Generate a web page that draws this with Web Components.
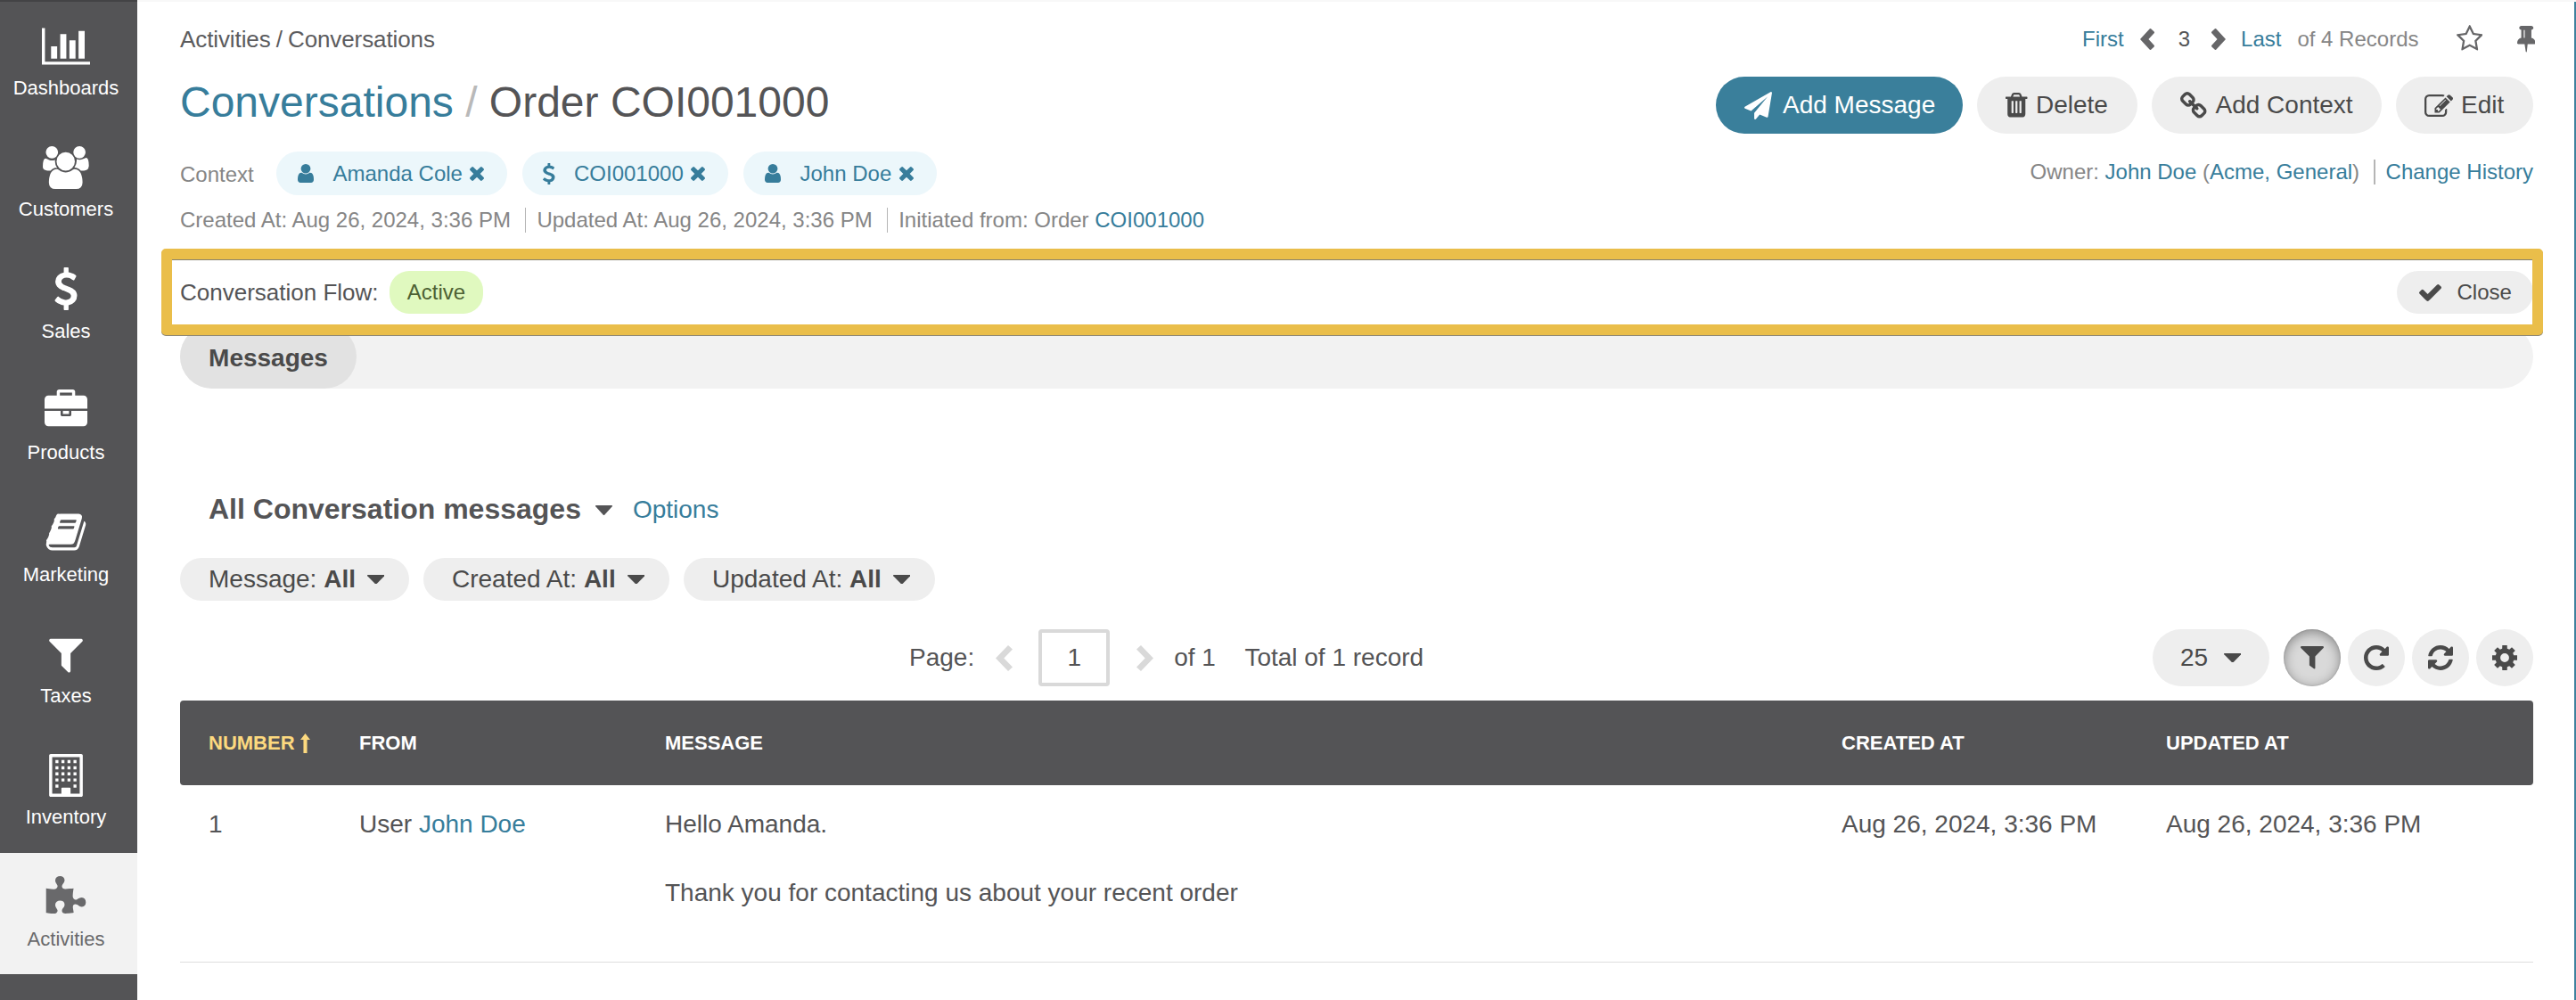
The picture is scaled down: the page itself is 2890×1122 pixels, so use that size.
<!DOCTYPE html>
<html lang="en">
<head>
<meta charset="utf-8">
<title>Order COI001000 - Conversations - Activities</title>
<style>
  html, body { margin: 0; height: 1122px; overflow: hidden; background: #fff; }
  body { font-family: "Liberation Sans", Arial, sans-serif; color: #545456; }
</style>
</head>
<body>
<app-shell>
  <app-sidebar slot="sidebar">
    <nav-item icon="chart" box="2048">Dashboards</nav-item>
    <nav-item icon="users" box="1920">Customers</nav-item>
    <nav-item icon="dollar">Sales</nav-item>
    <nav-item icon="briefcase">Products</nav-item>
    <nav-item icon="book">Marketing</nav-item>
    <nav-item icon="filter">Taxes</nav-item>
    <nav-item icon="building">Inventory</nav-item>
    <nav-item icon="puzzle" active>Activities</nav-item>
  </app-sidebar>
  <page-header></page-header>
  <flow-bar status="Active">Conversation Flow:</flow-bar>
  <tab-bar>Messages</tab-bar>
  <grid-title>All Conversation messages</grid-title>
  <filter-bar>
    <filter-chip label="Message:" style="width:257px"></filter-chip>
    <filter-chip label="Created At:" style="width:276px"></filter-chip>
    <filter-chip label="Updated At:" style="width:282px"></filter-chip>
  </filter-bar>
  <grid-toolbar></grid-toolbar>
  <message-grid></message-grid>
</app-shell>

<script>
const gear = (() => {
  const p = (r, a) => (r * Math.sin(a)).toFixed(2) + ' ' + (-r * Math.cos(a)).toFixed(2);
  const pts = [];
  for (let i = 0; i < 8; i++) {
    const a = i * Math.PI / 4;
    pts.push(p(10.3, a - .27), p(13.9, a - .19), p(13.9, a + .19), p(10.3, a + .27));
  }
  return 'M' + pts.join('L') + 'ZM4.8 0A4.8 4.8 0 1 0 -4.8 0A4.8 4.8 0 1 0 4.8 0Z';
})();
const building = (() => {
  const r = (x, y, w, h) => `M${x} ${y}h${w}v${h}h${-w}z`;
  let d = 'M256 0h1280q26 0 45 19t19 45v1664q0 26-19 45t-45 19h-1280q-26 0-45-19t-19-45v-1664q0-26 19-45t45-19z'
        + 'M320 128v1536h384v-224q0-32 32-32h320q32 0 32 32v224h384v-1536z';
  for (let row = 0; row < 5; row++)
    for (let col = 0; col < 4; col++)
      if (row < 4 || col % 3 === 0) d += r(456 + col * 252, 256 + row * 256, 124, 128);
  return d;
})();
const ICONS = {
  chart: "M640 896v512h-256v-512h256zm384-512v1024h-256v-1024h256zm1024 1152v128h-2048v-1536h128v1408h1920zm-640-896v768h-256v-768h256zm384-384v1152h-256v-1152h256z",
  users: "M593 896q-162 5-265 128h-134q-82 0-138-40.5t-56-118.5q0-353 124-353 6 0 43.5 21t97.5 42.5 119 21.5q67 0 133-23-5 37-5 66 0 159 93 286zm1071 637q0 120-73 189.5t-194 69.5h-874q-121 0-194-69.5t-73-189.5q0-53 3.5-103.5t14-109 26.5-108.5 43-97.5 62-81 85.5-53.5 111.5-20q10 0 43 21.5t73 48 107 48 135 21.5 135-21.5 107-48 73-48 43-21.5q61 0 111.5 20t85.5 53.5 62 81 43 97.5 26.5 108.5 14 109 3.5 103.5zm-1024-1277q0 106-75 181t-181 75-181-75-75-181 75-181 181-75 181 75 75 181zm704 384q0 159-112.5 271.5t-271.5 112.5-271.5-112.5-112.5-271.5 112.5-271.5 271.5-112.5 271.5 112.5 112.5 271.5zm576 225q0 78-56 118.5t-138 40.5h-134q-103-123-265-128 93-127 93-286 0-29-5-66 66 23 133 23 59 0 119-21.5t97.5-42.5 43.5-21q124 0 124 353zm-128-609q0 106-75 181t-181 75-181-75-75-181 75-181 181-75 181 75 75 181z",
  dollar: "M1362 1185q0 153-99.5 263.5t-258.5 136.5v175q0 14-9 23t-23 9h-135q-13 0-22.5-9.5t-9.5-22.5v-175q-66-9-127.5-31t-101.5-44.5-74-48-46.5-37.5-17.5-18q-17-21-2-41l103-135q7-10 23-12 15-2 24 9l2 2q113 99 243 125 37 8 74 8 81 0 142.5-43t61.5-122q0-28-15-53t-33.5-42-58.5-37.5-66-32-80-32.5q-39-16-61.5-25t-61.5-26.5-62.5-31-56.5-35.5-53.5-42.5-43.5-49-35.5-58-21-66.5-8.5-78q0-138 98-242t255-134v-180q0-13 9.5-22.5t22.5-9.5h135q14 0 23 9t9 23v176q57 6 110.5 23t87 33.5 63.5 37.5 39 29 15 14q17 18 5 38l-81 146q-8 15-23 16-14 3-27-7-3-3-14.5-12t-39-26.5-58.5-32-74.5-26-85.5-11.5q-95 0-155 43t-60 111q0 26 8.5 48t29.5 41.5 39.5 33 56 31 60.5 27 70 27.5q53 20 81 31.5t76 35 75.5 42.5 62 50 53 63.5 31.5 76.5 13 94z",
  briefcase: "M640 256h512v-128h-512v128zm1152 640v480q0 66-47 113t-113 47h-1472q-66 0-113-47t-47-113v-480h672v160q0 26 19 45t45 19h320q26 0 45-19t19-45v-160h672zm-768 0v128h-256v-128h256zm768-480v384h-1792v-384q0-66 47-113t113-47h352v-160q0-40 28-68t68-28h576q40 0 68 28t28 68v160h352q66 0 113 47t47 113z",
  book: "M1703 478q40 57 18 129l-275 906q-19 64-76.5 107.5t-122.5 43.5h-923q-77 0-148.5-53.5t-99.5-131.5q-24-67-2-127 0-4 3-27t4-37q1-8-3-21.5t-3-19.5q2-11 8-21t16.5-23.5 16.5-23.5q23-38 45-91.5t30-91.5q3-10 .5-30t-.5-28q3-11 17-28t17-23q21-36 42-92t25-90q1-9-2.5-32t.5-28q4-13 22-30.5t22-22.5q19-26 42.5-84.5t27.5-96.5q1-8-3-25.5t-2-26.5q2-8 9-18t18-23 17-21q8-12 16.5-30.5t15-35 16-36 19.5-32 26.5-23.5 36-11.5 47.5 5.5l-1 3q38-9 51-9h761q74 0 114 56t18 130l-274 906q-36 119-71.5 153.5t-128.5 34.5h-869q-27 0-38 15-11 16-1 43 24 70 144 70h923q29 0 56-15.5t35-41.5l300-987q7-22 5-57 38 15 59 43zm-1064 2q-4 13 2 22.5t20 9.5h608q13 0 25.5-9.5t16.5-22.5l21-64q4-13-2-22.5t-20-9.5h-608q-13 0-25.5 9.5t-16.5 22.5zm-83 256q-4 13 2 22.5t20 9.5h608q13 0 25.5-9.5t16.5-22.5l21-64q4-13-2-22.5t-20-9.5h-608q-13 0-25.5 9.5t-16.5 22.5z",
  filter: "M1595 295q17 41-14 70l-493 493v742q0 42-39 59-13 5-25 5-27 0-45-19l-256-256q-19-19-19-45v-486l-493-493q-31-29-14-70 17-39 59-39h1280q42 0 59 39z",
  building,
  puzzle: "M1728 1098q0 81-44.5 135t-123.5 54q-41 0-77.5-17.5t-59-38-56.5-38-71-17.5q-110 0-110 124 0 39 16 115t15 115v5q-22 0-33 1-34 3-97.5 11.5t-115.5 13.5-98 5q-61 0-103-26.5t-42-83.5q0-37 17.5-71t38-56.5 38-59 17.5-77.5q0-79-54-123.5t-135-44.5q-84 0-143 45.5t-59 127.5q0 43 15 83t33.5 64.5 33.5 53 15 50.5q0 45-46 89-37 35-117 35-95 0-245-24-9-2-27.5-4t-27.5-4l-13-2q-1 0-3-1-2 0-2-1v-1024q2 1 17.5 3.5t34 5 21.5 3.5q150 24 245 24 80 0 117-35 46-44 46-89 0-22-15-50.5t-33.5-53-33.5-64.5-15-83q0-82 59-127.5t144-45.5q80 0 134 44.5t54 123.5q0 41-17.5 77.5t-38 59-38 56.5-17.5 71q0 57 42 83.5t103 26.5q64 0 180-15t163-17v2q-1 2-3.5 17.5t-5 34-3.5 21.5q-24 150-24 245 0 80 35 117 44 46 89 46 22 0 50.5-15t53-33.5 64.5-33.5 83-15q82 0 127.5 59t45.5 143z",
  user: "M1536 1399q0 109-62.5 187t-150.5 78h-854q-88 0-150.5-78t-62.5-187q0-85 8.5-160.5t31.5-152 58.5-131 94-89 134.5-34.5q131 128 313 128t313-128q76 0 134.5 34.5t94 89 58.5 131 31.5 152 8.5 160.5zm-256-887q0 159-112.5 271.5t-271.5 112.5-271.5-112.5-112.5-271.5 112.5-271.5 271.5-112.5 271.5 112.5 112.5 271.5z",
  times: "M1490 1322q0 40-28 68l-136 136q-28 28-68 28t-68-28l-294-294-294 294q-28 28-68 28t-68-28l-136-136q-28-28-28-68t28-68l294-294-294-294q-28-28-28-68t28-68l136-136q28-28 68-28t68 28l294 294 294-294q28-28 68-28t68 28l136 136q28 28 28 68t-28 68l-294 294 294 294q28 28 28 68z",
  plane: "M1764 11q33 24 27 64l-256 1536q-5 29-32 45-14 8-31 8-11 0-24-5l-453-185-242 295q-18 23-49 23-13 0-22-4-19-7-30.5-23.5t-11.5-36.5v-349l864-1059-1069 925-395-162q-37-14-40-55-2-40 32-59l1664-960q15-9 32-9 20 0 36 11z",
  trash: "M704 1376v-704q0-14-9-23t-23-9h-64q-14 0-23 9t-9 23v704q0 14 9 23t23 9h64q14 0 23-9t9-23zm256 0v-704q0-14-9-23t-23-9h-64q-14 0-23 9t-9 23v704q0 14 9 23t23 9h64q14 0 23-9t9-23zm256 0v-704q0-14-9-23t-23-9h-64q-14 0-23 9t-9 23v704q0 14 9 23t23 9h64q14 0 23-9t9-23zm-544-992h448l-48-117q-7-9-17-11h-317q-10 2-17 11zm928 32v64q0 14-9 23t-23 9h-96v948q0 83-47 143.5t-113 60.5h-832q-66 0-113-58.5t-47-141.5v-952h-96q-14 0-23-9t-9-23v-64q0-14 9-23t23-9h309l70-167q15-37 54-63t79-26h320q40 0 79 26t54 63l70 167h309q14 0 23 9t9 23z",
  link: "M1520 1216q0-40-28-68l-208-208q-28-28-68-28-42 0-72 32 3 3 19 18.5t21.5 21.5 15 19 13 25.5 3.5 27.5q0 40-28 68t-68 28q-15 0-27.5-3.5t-25.5-13-19-15-21.5-21.5-18.5-19q-33 31-33 73 0 40 28 68l206 207q27 27 68 27 40 0 68-26l147-146q28-28 28-67zm-703-705q0-40-28-68l-206-207q-28-28-68-28-39 0-68 27l-147 146q-28 28-28 67 0 40 28 68l208 208q27 27 68 27 42 0 72-31-3-3-19-18.5t-21.5-21.5-15-19-13-25.5-3.5-27.5q0-40 28-68t68-28q15 0 27.5 3.5t25.5 13 19 15 21.5 21.5 18.5 19q33-31 33-73zm895 705q0 120-85 203l-147 146q-83 83-203 83-121 0-204-85l-206-207q-83-83-83-203 0-123 88-209l-88-88q-86 88-208 88-120 0-204-84l-208-208q-84-84-84-204t85-203l147-146q83-83 203-83 121 0 204 85l206 207q83 83 83 203 0 123-88 209l88 88q86-88 208-88 120 0 204 84l208 208q84 84 84 204z",
  edit: "M888 1184l116-116-152-152-116 116v56h96v96h56zm440-720q-16-16-33 1l-350 350q-17 17-1 33t33-1l350-350q17-17 1-33zm80 594v190q0 119-84.5 203.5t-203.5 84.5h-832q-119 0-203.5-84.5t-84.5-203.5v-832q0-119 84.5-203.5t203.5-84.5h832q63 0 117 25 15 7 18 23 3 17-9 29l-49 49q-14 14-32 8-23-6-45-6h-832q-66 0-113 47t-47 113v832q0 66 47 113t113 47h832q66 0 113-47t47-113v-126q0-13 9-22l64-64q15-15 35-7t20 29zm-96-738l288 288-672 672h-288v-288zm444 132l-92 92-288-288 92-92q28-28 68-28t68 28l152 152q28 28 28 68t-28 68z",
  check: "M1671 566q0 40-28 68l-724 724-136 136q-28 28-68 28t-68-28l-136-136-362-362q-28-28-28-68t28-68l136-136q28-28 68-28t68 28l294 295 656-657q28-28 68-28t68 28l136 136q28 28 28 68z",
  star: "M1201 1004l306-297-422-62-189-382-189 382-422 62 306 297-73 421 378-199 377 199zm527-357q0 22-26 48l-363 354 86 500q1 7 1 20 0 50-41 50-19 0-40-12l-449-236-449 236q-22 12-40 12-21 0-31.5-14.5t-10.5-35.5q0-6 2-20l86-500-364-354q-25-27-25-48 0-37 56-46l502-73 225-455q19-41 49-41t49 41l225 455 502 73q56 9 56 46z",
  pin: "M800 864v-448q0-14-9-23t-23-9-23 9-9 23v448q0 14 9 23t23 9 23-9 9-23zm672 352q0 26-19 45t-45 19h-429l-51 483q-2 12-10.5 20.5t-20.5 8.5h-1q-27 0-32-27l-76-485h-404q-26 0-45-19t-19-45q0-123 78.5-221.5t177.5-98.5v-512q-52 0-90-38t-38-90 38-90 90-38h640q52 0 90 38t38 90-38 90-90 38v512q99 0 177.5 98.5t78.5 221.5z",
  prev: "M0 12L10.5 .6Q11.3 -.2 12.1 .5L15.6 3.7Q16.3 4.5 15.6 5.3L9.4 12L15.6 18.7Q16.3 19.5 15.6 20.3L12.1 23.5Q11.3 24.2 10.5 23.4Z",
  next: "M16 12L5.5 .6Q4.7 -.2 3.9 .5L.4 3.7Q-.3 4.5 .4 5.3L6.6 12L.4 18.7Q-.3 19.5 .4 20.3L3.9 23.5Q4.7 24.2 5.5 23.4Z",
  pagePrev: "M0 14.5L14 0L19 4.5L9.3 14.5L19 24.5L14 29Z",
  pageNext: "M19 14.5L5 0L0 4.5L9.7 14.5L0 24.5L5 29Z",
  caret: "M.6 0H18.4Q19.4 .3 18.8 1.2L10.2 9.7Q9.5 10.3 8.8 9.7L.2 1.2Q-.4 .3 .6 0Z",
  sort: "M5.25 0L10.5 7H7.2V22H3.3V7H0Z",
  funnel: "M1 0H25Q26.5 .6 25.6 2L16.4 11.5V25Q15.6 25.8 14.6 25L9.9 21.3V11.5L.4 2Q-.5 .6 1 0Z",
  redo: "M256.455 8c66.269.119 126.437 26.233 170.859 68.685l35.715-35.715C478.149 25.851 504 36.559 504 57.941V192c0 13.255-10.745 24-24 24H345.941c-21.382 0-32.09-25.851-16.971-40.971l41.75-41.75c-30.864-28.899-70.801-44.907-113.23-45.273-92.398-.798-170.283 73.977-169.484 169.442C88.764 348.009 162.184 424 256 424c41.127 0 79.997-14.678 110.629-41.556 4.743-4.161 11.906-3.908 16.368.553l39.662 39.662c4.872 4.872 4.631 12.815-.482 17.433C378.202 479.813 319.926 504 256 504 119.034 504 8.001 392.967 8 256.002 7.999 119.193 119.646 7.755 256.455 8z",
  sync: "M370.72 133.28C339.458 104.008 298.888 87.962 255.848 88c-77.458.068-144.328 53.178-162.791 126.85-1.344 5.363-6.122 9.15-11.651 9.15H24.103c-7.498 0-13.194-6.807-11.807-14.176C33.933 94.924 134.813 8 256 8c66.448 0 126.791 26.136 171.315 68.685L463.03 40.97C478.149 25.851 504 36.559 504 57.941V192c0 13.255-10.745 24-24 24H345.941c-21.382 0-32.09-25.851-16.971-40.971l41.75-41.749zM32 296h134.059c21.382 0 32.09 25.851 16.971 40.971l-41.75 41.75c31.262 29.273 71.835 45.319 114.876 45.28 77.418-.07 144.315-53.144 162.787-126.849 1.344-5.363 6.122-9.15 11.651-9.15h57.304c7.498 0 13.194 6.807 11.807 14.176C478.067 417.076 377.187 504 256 504c-66.448 0-126.791-26.136-171.315-68.685L48.97 471.03C33.851 486.149 8 475.441 8 454.059V320c0-13.255 10.745-24 24-24z",
  gear
};

const BASE = `*{box-sizing:border-box} :host{box-sizing:border-box} a{color:#377d9b;text-decoration:none} .row{display:flex;align-items:center;white-space:nowrap}`;

function define(name, css, html, after) {
  customElements.define(name, class extends HTMLElement {
    connectedCallback() {
      if (this.shadowRoot) return;
      const root = this.attachShadow({ mode: 'open' });
      root.innerHTML = `<style>${BASE}${css}</style>` + (typeof html === 'function' ? html(this) : html);
      if (after) after(this, root);
    }
  });
}

/* Glyph stretched to its w x h box, or kept on its em square when "box" is set. */
define('ui-icon', `:host{display:block;flex:none} svg{display:block;width:100%;height:100%;fill:currentColor}`,
  el => `<svg aria-hidden="true"><path fill-rule="${['building','gear'].includes(el.getAttribute('name')) ? 'evenodd' : 'nonzero'}" d="${ICONS[el.getAttribute('name')]}"/></svg>`,
  (el, root) => {
    const svg = root.querySelector('svg');
    el.style.width = el.getAttribute('w') + 'px';
    el.style.height = el.getAttribute('h') + 'px';
    if (el.hasAttribute('box')) {
      svg.setAttribute('viewBox', `0 0 ${el.getAttribute('box')} 1792`);
    } else {
      const b = svg.querySelector('path').getBBox();
      svg.setAttribute('viewBox', `${b.x} ${b.y} ${b.width} ${b.height}`);
      svg.setAttribute('preserveAspectRatio', 'none');
    }
  });

define('app-shell', `
  :host{display:flex;height:1122px;background:#fff;border-top:2px solid #f8f8f8}
  ::slotted(app-sidebar){margin-top:-2px}
  main{flex:1;min-width:0;padding:0 46px 0 48px;border-right:2px solid #3f819d;display:flex;flex-direction:column}`,
  `<slot name="sidebar"></slot><main><slot></slot></main>`);

define('app-sidebar', `
  :host{display:flex;flex-direction:column;flex:none;width:154px;height:1122px;background:#545456;border-top:2px solid #434345;color:#fff}`,
  `<slot></slot>`);

define('nav-item', `
  :host{display:flex;flex-direction:column;align-items:center;height:136.43px;flex:none;padding:25.6px 6px 0 0;font-size:22px;line-height:28px}
  :host([active]){background:#f2f2f2;color:#69696b}
  span{margin-top:9.3px}`,
  el => {
    const box = +(el.getAttribute('box') || 1792);
    return `<ui-icon name="${el.getAttribute('icon')}" box="${box}" w="${box / 1792 * 48}" h="48"></ui-icon><span><slot></slot></span>`;
  });

define('context-chip', `
  :host{display:flex;align-items:center;height:49px;border-radius:25px;background:#ecf7fb;color:#377d9b;white-space:nowrap;flex:none}
  span{line-height:28px;padding-top:1px}`,
  el => {
    const d = el.getAttribute('icon') === 'dollar';
    return `<ui-icon name="${el.getAttribute('icon')}" w="${d ? 13.5 : 18}" h="${d ? 24 : 21}" style="margin:0 ${d ? 21.5 : 22}px 0 ${d ? 23 : 23.5}px"></ui-icon>
      <span><slot></slot></span><ui-icon name="times" w="16" h="16" style="margin-left:auto;margin-right:26px;margin-top:1px"></ui-icon>`;
  });

define('ui-button', `
  :host{display:flex;align-items:center;height:64px;border-radius:32px;background:#eee;color:#4a4a4a;font-size:28px;padding-left:32px;white-space:nowrap;flex:none}
  :host([primary]){background:#3a7f9b;color:#fff}
  span{margin-left:var(--gap,12px)}`,
  el => `<ui-icon name="${el.getAttribute('icon')}" w="${el.getAttribute('iw')}" h="${el.getAttribute('ih')}"></ui-icon><span><slot></slot></span>`);

define('page-header', `
  :host{display:flex;justify-content:space-between;height:259px;padding-top:22px;font-size:24px;color:#868686;flex:none}
  .col{display:flex;flex-direction:column}
  .col.right{align-items:flex-end}
  .crumbs{height:40px;font-size:26px;color:#5c5c5e;word-spacing:-1px;letter-spacing:-.1px}
  .title{height:57px;margin-top:22px;font-size:48px;color:#545456;white-space:pre}
  .title i{font-style:normal;color:#b9b9b9}
  .context{height:49px;margin-top:27px;gap:17px}
  .context b{font-weight:400;width:91px;padding-top:2px}
  .meta{height:28px;margin-top:14px}
  .sep{width:1.5px;height:28px;background:#b5b5b5;margin:0 12px 0 16px}
  .pager{height:40px}
  .actions{margin-top:22px;gap:16px}
  .owner{height:28px;margin-top:29px}
  .gr{color:#666668}`,
  `<div class="col">
    <div class="row crumbs">Activities / Conversations</div>
    <div class="row title"><a>Conversations</a><i> / </i>Order COI001000</div>
    <div class="row context"><b>Context</b>
      <context-chip icon="user" style="width:259px">Amanda Cole</context-chip>
      <context-chip icon="dollar" style="width:231px">COI001000</context-chip>
      <context-chip icon="user" style="width:217px">John Doe</context-chip></div>
    <div class="row meta"><span>Created At: Aug 26, 2024, 3:36 PM</span><div class="sep"></div><span>Updated At: Aug 26, 2024, 3:36 PM</span><div class="sep"></div><span>Initiated from: Order <a>COI001000</a></span></div>
  </div>
  <div class="col right">
    <div class="row pager"><a>First</a>
      <ui-icon class="gr" name="prev" w="16" h="24" style="margin-left:18px"></ui-icon>
      <span style="color:#545456;margin:0 24px 0 27px">3</span>
      <ui-icon class="gr" name="next" w="16" h="24"></ui-icon>
      <a style="margin-left:17px">Last</a><span style="margin-left:18px">of 4 Records</span>
      <ui-icon class="gr" name="star" w="29.5" h="28.5" style="margin:-3px 0 0 42px"></ui-icon>
      <ui-icon class="gr" name="pin" w="20.5" h="29.5" style="margin-left:38.5px;margin-right:-2px"></ui-icon></div>
    <div class="row actions">
      <ui-button primary icon="plane" iw="31" ih="31" style="width:277px">Add Message</ui-button>
      <ui-button icon="trash" iw="24.5" ih="27.5" style="width:180px;--gap:9.5px">Delete</ui-button>
      <ui-button icon="link" iw="29.5" ih="29.5" style="width:258px;--gap:10px">Add Context</ui-button>
      <ui-button icon="edit" iw="32" ih="25" style="width:154px;--gap:9px">Edit</ui-button></div>
    <div class="row owner"><span>Owner: <a>John Doe</a> (<a>Acme, General</a>)</span><div class="sep"></div><a>Change History</a></div>
  </div>`);

/* Highlighted frame lies over the top of the tab strip. */
define('flow-bar', `
  :host{display:flex;align-items:center;height:97px;flex:none;margin:18px -11px 0 -21px;border:12px solid #eabe4a;border-radius:5px;background:#fff;
    box-shadow:0 1px 0 #8b8676, inset 0 1px 0 #84806f;padding:1px 0 0 9px;position:relative;z-index:1;overflow:hidden;font-size:26px;white-space:nowrap}
  .badge{margin-left:12.5px;width:105px;height:48px;border-radius:22px;background:#e0f9bf;color:#4d6133;font-size:24px;line-height:48px;text-align:center}
  .close{margin-left:auto;margin-right:-1px;width:153px;height:48px;border-radius:24px;background:#eee;color:#4a4a4a;font-size:24px;display:flex;align-items:center;padding-left:25px}
  .close span{margin-left:17.5px}`,
  el => `<span><slot></slot></span><div class="badge">${el.getAttribute('status')}</div>
    <div class="close"><ui-icon name="check" w="25" h="19"></ui-icon><span>Close</span></div>`);

define('tab-bar', `
  :host{display:flex;height:72px;flex:none;margin-top:-12px;background:#f2f2f2;border-radius:36px}
  div{width:198px;height:72px;border-radius:36px;background:#e2e2e2;color:#4a4a4a;font-size:28px;font-weight:700;line-height:75px;text-align:center}`,
  `<div><slot></slot></div>`);

define('grid-title', `
  :host{display:flex;align-items:center;height:40px;flex:none;margin-top:115.5px;padding-left:32px;font-size:32px;font-weight:700;white-space:nowrap}
  a{font-size:28px;font-weight:400;margin-left:23px}`,
  `<span><slot></slot></span><ui-icon name="caret" w="19" h="11" style="margin:2px 0 0 16px"></ui-icon><a>Options</a>`);

define('filter-bar', `:host{display:flex;gap:16px;margin-top:34.5px;flex:none}`, `<slot></slot>`);

define('filter-chip', `
  :host{display:flex;align-items:center;height:48px;border-radius:24px;background:#eee;color:#4a4a4a;font-size:28px;padding:0 28px 0 32px;white-space:nowrap}
  ui-icon{margin-left:auto}`,
  el => `<span>${el.getAttribute('label')} <b>All</b></span><ui-icon name="caret" w="19.5" h="10.5"></ui-icon>`);

define('grid-toolbar', `
  :host{display:flex;align-items:center;height:64px;flex:none;margin-top:32px;padding-left:818px;font-size:28px;white-space:nowrap}
  .dim{color:#d9d9d9}
  .input{width:80px;height:64px;border:4px solid #d9d9d9;border-radius:4px;margin:0 30px 0 29px;display:flex;align-items:center;justify-content:center}
  .right{margin-left:auto;display:flex;gap:8px}
  .size{width:131px;height:64px;border-radius:32px;background:#eee;color:#4a4a4a;display:flex;align-items:center;padding:0 32px 0 31px;justify-content:space-between;margin-right:8px}
  .round{width:64px;height:64px;border-radius:50%;background:#eee;color:#4a4a4a;display:flex;align-items:center;justify-content:center}
  .round.on{background:#d9d9d9;box-shadow:inset 0 3px 13px rgba(0,0,0,.38), inset 0 0 2px rgba(0,0,0,.2)}`,
  `<span>Page:</span><ui-icon class="dim" name="pagePrev" w="19" h="29" style="margin-left:24px"></ui-icon>
   <div class="input">1</div><ui-icon class="dim" name="pageNext" w="19" h="29"></ui-icon>
   <span style="margin-left:23px">of 1</span><span style="margin-left:32.5px">Total of 1 record</span>
   <div class="right"><div class="size">25<ui-icon name="caret" w="19.5" h="10.5"></ui-icon></div>
     <div class="round on"><ui-icon name="funnel" w="26" h="25.5"></ui-icon></div>
     <div class="round"><ui-icon name="redo" w="28" h="28"></ui-icon></div>
     <div class="round"><ui-icon name="sync" w="28" h="28"></ui-icon></div>
     <div class="round"><ui-icon name="gear" w="28" h="28"></ui-icon></div></div>`);

define('message-grid', `
  :host{display:block;margin-top:16px;flex:none;font-size:28px;white-space:nowrap}
  .head,.body{display:grid;grid-template-columns:169px 343px 1320px 364px 1fr;padding-left:32px}
  .head{height:95px;align-items:center;background:#545456;border-radius:4px;color:#fff;font-size:22px;font-weight:700;text-transform:uppercase}
  .sorted{color:#fcd97f;display:flex;align-items:center}
  .body{height:199px;padding-top:24px;line-height:40px;border-bottom:1px solid #dedede}
  p{margin:0 0 37px}`,
  `<div class="head"><div class="sorted">Number<ui-icon name="sort" w="11" h="22" style="margin-left:6.5px"></ui-icon></div><div>From</div><div>Message</div><div>Created At</div><div>Updated At</div></div>
   <div class="body"><div>1</div><div>User <a>John Doe</a></div><div><p>Hello Amanda.</p><p>Thank you for contacting us about your recent order</p></div><div>Aug 26, 2024, 3:36 PM</div><div>Aug 26, 2024, 3:36 PM</div></div>`);
</script>
</body>
</html>
